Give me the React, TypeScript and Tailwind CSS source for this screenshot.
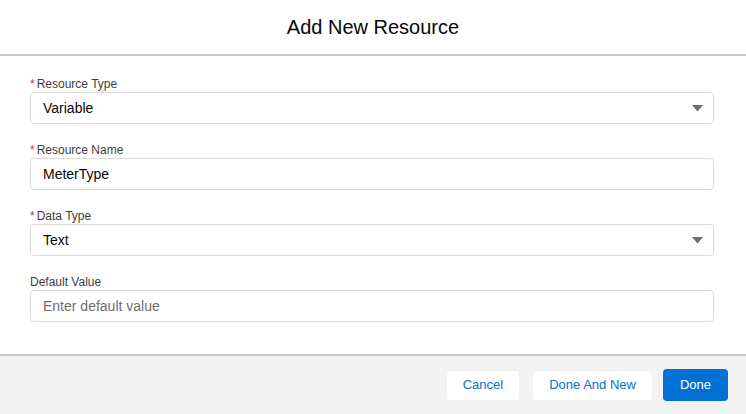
const fields = [
  { label: 'Resource Type', value: 'Variable', required: true, select: true },
  { label: 'Resource Name', value: 'MeterType', required: true, select: false },
  { label: 'Data Type', value: 'Text', required: true, select: true },
  { label: 'Default Value', value: '', placeholder: 'Enter default value', required: false, select: false },
];

function App() {
  return (
    <div className="w-[746px] h-[414px] bg-white flex flex-col font-['Liberation_Sans',Arial,sans-serif] overflow-hidden">
      <div className="h-[56px] flex items-center justify-center border-b-2 border-[#c9c9c9] shrink-0">
        <h1 className="text-[20px] text-[#080707] leading-none">Add New Resource</h1>
      </div>

      <div className="flex-1 pl-[30px] pr-[32px] pt-[20px] flex flex-col gap-[18px]">
        {fields.map((f) => (
          <div key={f.label} className="flex flex-col">
            <label className="text-[12px] leading-[16px] text-[#3e3e3c]">
              {f.required && <span className="text-[#c23934] mr-[2px]">*</span>}
              {f.label}
            </label>
            <div className="relative h-[32px] border border-[#dddbda] rounded-[4px] bg-white flex items-center px-[12px]">
              <span className={`text-[14px] ${f.value ? 'text-[#080707]' : 'text-[#706e6b]'}`}>
                {f.value || f.placeholder}
              </span>
              {f.select && (
                <svg className="absolute right-[10px] top-[12px]" width="11" height="7" viewBox="0 0 11 7">
                  <path d="M0 0 H11 L5.5 6.5 Z" fill="#706e6b" />
                </svg>
              )}
            </div>
          </div>
        ))}
      </div>

      <div className="h-[60px] shrink-0 bg-[#f3f3f3] border-t-2 border-[#c9c9c9] flex items-center justify-end gap-[12px] pr-[18px]">
        <button className="h-[31px] px-[16px] bg-white rounded-[4px] border border-[#f0f0f0] text-[13px] text-[#0070d2]">
          Cancel
        </button>
        <button className="h-[31px] px-[16px] bg-white rounded-[4px] border border-[#f0f0f0] text-[13px] text-[#0070d2]">
          Done And New
        </button>
        <button className="h-[32px] px-[17px] bg-[#0070d2] rounded-[4px] text-[13px] text-white -ml-[2px]">
          Done
        </button>
      </div>
    </div>
  );
}

export default App;
